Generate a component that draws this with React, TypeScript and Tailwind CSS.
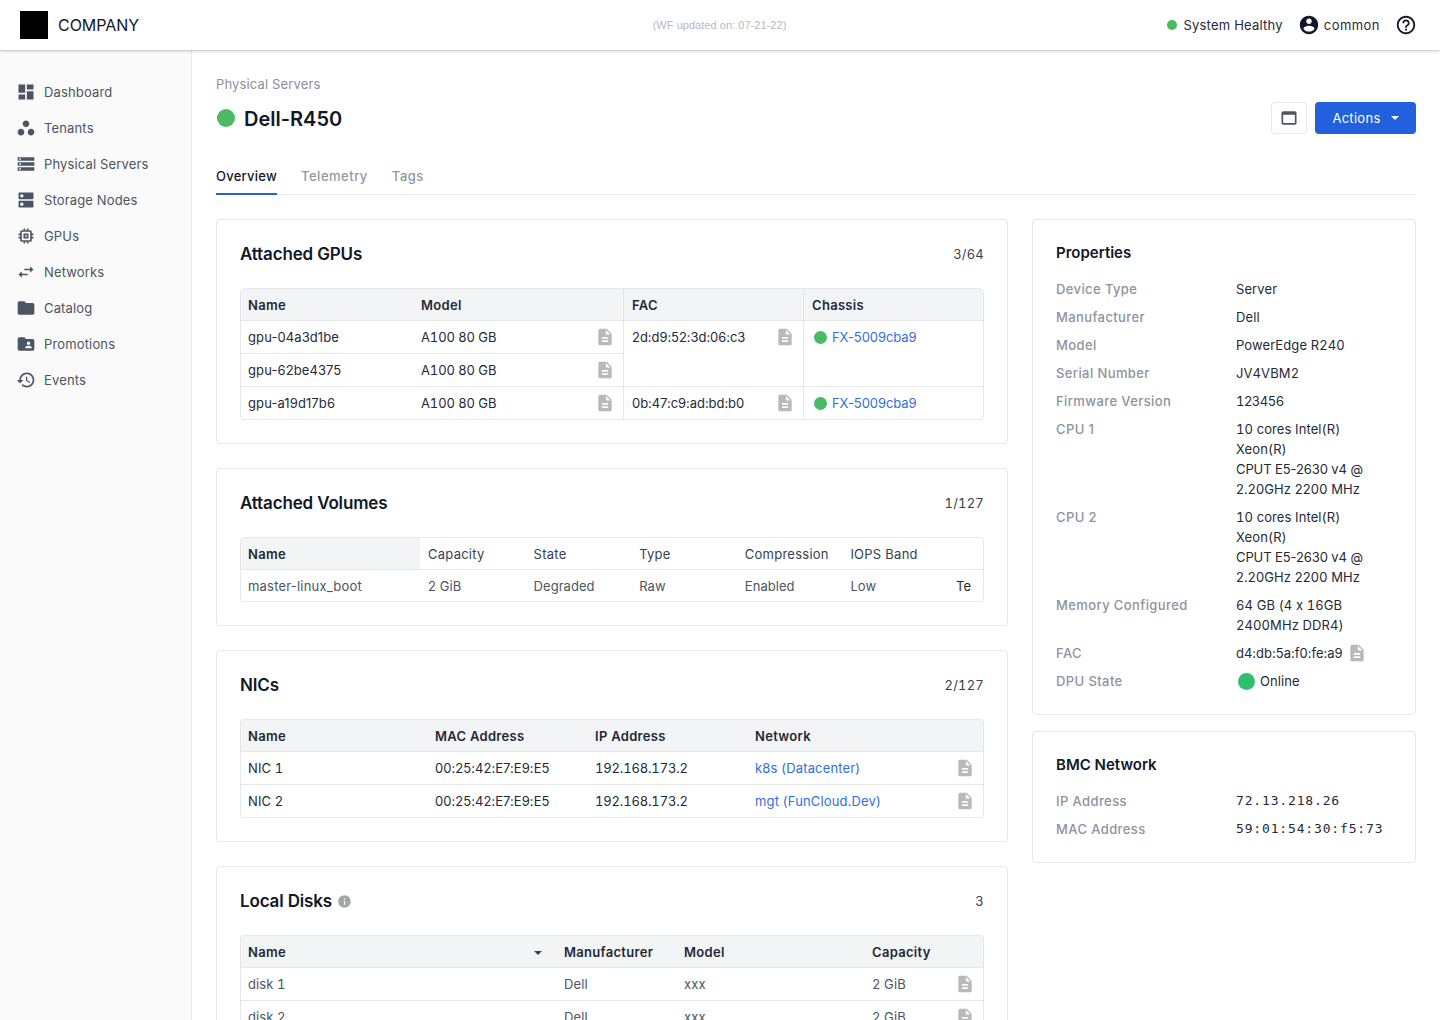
import React from 'react';

const icons = {
  dashboard: 'M3 13h8V3H3v10zm0 8h8v-6H3v6zm10 0h8V11h-8v10zm0-18v6h8V3h-8z',
  workspaces:
    'M6 13c-2.2 0-4 1.8-4 4s1.8 4 4 4 4-1.8 4-4-1.8-4-4-4zm12 0c-2.2 0-4 1.8-4 4s1.8 4 4 4 4-1.8 4-4-1.8-4-4-4zm-6-10C9.8 3 8 4.8 8 7s1.8 4 4 4 4-1.8 4-4-1.8-4-4-4z',
  storage: 'M2 20h20v-4H2v4zm2-3h2v2H4v-2zM2 4v4h20V4H2zm4 3H4V5h2v2zm-4 7h20v-4H2v4zm2-3h2v2H4v-2z',
  dns: 'M20 13H4c-.55 0-1 .45-1 1v6c0 .55.45 1 1 1h16c.55 0 1-.45 1-1v-6c0-.55-.45-1-1-1zM7 19c-1.1 0-2-.9-2-2s.9-2 2-2 2 .9 2 2-.9 2-2 2zM20 3H4c-.55 0-1 .45-1 1v6c0 .55.45 1 1 1h16c.55 0 1-.45 1-1V4c0-.55-.45-1-1-1zM7 9c-1.1 0-2-.9-2-2s.9-2 2-2 2 .9 2 2-.9 2-2 2z',
  memory:
    'M15 9H9v6h6V9zm-2 4h-2v-2h2v2zm8-2V9h-2V7c0-1.1-.9-2-2-2h-2V3h-2v2h-2V3H9v2H7c-1.1 0-2 .9-2 2v2H3v2h2v2H3v2h2v2c0 1.1.9 2 2 2h2v2h2v-2h2v2h2v-2h2c1.1 0 2-.9 2-2v-2h2v-2h-2v-2h2zm-4 6H7V7h10v10z',
  swap: 'M6.99 11L3 15l3.99 4v-3H14v-2H6.99v-3zM21 9l-3.99-4v3H10v2h7.01v3L21 9z',
  folder: 'M10 4H4c-1.1 0-1.99.9-1.99 2L2 18c0 1.1.9 2 2 2h16c1.1 0 2-.9 2-2V8c0-1.1-.9-2-2-2h-8l-2-2z',
  folderShared:
    'M20 6h-8l-2-2H4c-1.1 0-1.99.9-1.99 2L2 18c0 1.1.9 2 2 2h16c1.1 0 2-.9 2-2V8c0-1.1-.9-2-2-2zm-5 3c1.1 0 2 .9 2 2s-.9 2-2 2-2-.9-2-2 .9-2 2-2zm4 8h-8v-1c0-1.33 2.67-2 4-2s4 .67 4 2v1z',
  history:
    'M13 3c-4.97 0-9 4.03-9 9H1l3.89 3.89.07.14L9 12H6c0-3.87 3.13-7 7-7s7 3.13 7 7-3.13 7-7 7c-1.93 0-3.68-.79-4.94-2.06l-1.42 1.42C8.27 19.99 10.51 21 13 21c4.97 0 9-4.03 9-9s-4.03-9-9-9zm-1 5v5l4.28 2.54.72-1.21-3.5-2.08V8H12z',
  account:
    'M12 2C6.48 2 2 6.48 2 12s4.48 10 10 10 10-4.48 10-10S17.52 2 12 2zm0 3c1.66 0 3 1.34 3 3s-1.34 3-3 3-3-1.34-3-3 1.34-3 3-3zm0 14.2c-2.5 0-4.71-1.28-6-3.22.03-1.99 4-3.08 6-3.08 1.99 0 5.97 1.09 6 3.08-1.29 1.94-3.5 3.22-6 3.22z',
  help: 'M11 18h2v-2h-2v2zm1-16C6.48 2 2 6.48 2 12s4.48 10 10 10 10-4.48 10-10S17.52 2 12 2zm0 18c-4.41 0-8-3.59-8-8s3.59-8 8-8 8 3.59 8 8-3.59 8-8 8zm0-14c-2.21 0-4 1.79-4 4h2c0-1.1.9-2 2-2s2 .9 2 2c0 2-3 1.75-3 5h2c0-2.25 3-2.5 3-5 0-2.21-1.79-4-4-4z',
  webAsset: 'M19 4H5c-1.11 0-2 .9-2 2v12c0 1.1.89 2 2 2h14c1.1 0 2-.9 2-2V6c0-1.1-.89-2-2-2zm0 14H5V8h14v10z',
  doc: 'M14.59 2.59c-.38-.38-.89-.59-1.42-.59H6c-1.1 0-2 .9-2 2v16c0 1.1.89 2 1.99 2H18c1.1 0 2-.9 2-2V8.83c0-.53-.21-1.04-.59-1.41l-4.82-4.83zM15 18H9c-.55 0-1-.45-1-1s.45-1 1-1h6c.55 0 1 .45 1 1s-.45 1-1 1zm0-4H9c-.55 0-1-.45-1-1s.45-1 1-1h6c.55 0 1 .45 1 1s-.45 1-1 1zm-2-6V3.5L18.5 9H14c-.55 0-1-.45-1-1z',
  info: 'M12 2C6.48 2 2 6.48 2 12s4.48 10 10 10 10-4.48 10-10S17.52 2 12 2zm1 15h-2v-6h2v6zm0-8h-2V7h2v2z',
};

function Icon({ d, className }: { d: string; className: string }) {
  return (
    <svg viewBox="0 0 24 24" fill="currentColor" className={className}>
      <path d={d} />
    </svg>
  );
}

const DocIcon = () => <Icon d={icons.doc} className="w-5 h-5 text-[#b8b9bd] shrink-0" />;

const Caret = ({ className }: { className: string }) => (
  <svg viewBox="0 0 10 5" fill="currentColor" className={className}>
    <path d="M0 0h10L5 5z" />
  </svg>
);

const navItems = [
  { label: 'Dashboard', icon: icons.dashboard },
  { label: 'Tenants', icon: icons.workspaces },
  { label: 'Physical Servers', icon: icons.storage },
  { label: 'Storage Nodes', icon: icons.dns },
  { label: 'GPUs', icon: icons.memory },
  { label: 'Networks', icon: icons.swap },
  { label: 'Catalog', icon: icons.folder },
  { label: 'Promotions', icon: icons.folderShared },
  { label: 'Events', icon: icons.history },
];

function Sidebar() {
  return (
    <aside className="w-[192px] shrink-0 bg-[#fafafa] border-r border-[#e5e7eb] pt-6">
      {navItems.map((item) => (
        <div key={item.label} className="h-9 pl-4 flex items-center gap-2 text-[13px] tracking-[0.15px] text-[#4b5563]">
          <Icon d={item.icon} className="w-5 h-5 text-[#4b5563]" />
          <span className="pt-0.5">{item.label}</span>
        </div>
      ))}
    </aside>
  );
}

function Card({ title, count, info, children }: { title: string; count: string; info?: boolean; children: React.ReactNode }) {
  return (
    <section className="bg-white border border-[#e5e7eb] rounded p-[23px]">
      <div className="h-5 mb-[25px] pt-[3px] flex items-center justify-between">
        <h2 className="flex items-center gap-[5px] text-[17px] font-semibold tracking-[-0.15px] text-[#111827]">
          {title}
          {info && <Icon d={icons.info} className="w-[15px] h-[15px] text-[#a3a5aa]" />}
        </h2>
        <span className="text-[13px] tabular-nums tracking-[0.2px] text-[#374151]">{count}</span>
      </div>
      {children}
    </section>
  );
}

const th =
  "h-8 px-2 first:pl-[7px] pt-0.5 pb-0 text-left text-[13px] font-semibold tracking-[0.3px] text-[#1f2937] bg-[#f3f4f6] border-b border-[#e5e7eb]";
// cells hold either plain text (nudged down by pt-0.5) or a h-8 flex row
const td = 'h-[33px] px-2 first:pl-[7px] py-0 text-[13px] tracking-[0.1px] text-[#1f2937] border-b border-[#e5e7eb]';
const tdLast = 'h-8 px-2 first:pl-[7px] py-0 text-[13px] tracking-[0.1px] text-[#1f2937]';
const num = 'tabular-nums tracking-[-0.15px]';
const nudge = 'block pt-0.5';

const StatusLink = ({ label }: { label: string }) => (
  <div className="flex items-center gap-[5px] h-8">
    <span className="w-[13px] h-[13px] ml-0.5 rounded-full bg-[#48bb63]" />
    <a className="pt-0.5 tracking-[-0.08px] text-[#2f6fe4]">{label}</a>
  </div>
);

const CellWithDoc = ({ text, numeric }: { text: string; numeric?: boolean }) => (
  <div className="flex items-center justify-between h-8">
    <span className={`pt-0.5 ${numeric ? 'tabular-nums tracking-[-0.1px]' : 'tracking-[-0.05px]'}`}>{text}</span>
    <DocIcon />
  </div>
);

function GpuTable() {
  return (
    <div className="border border-[#e5e7eb] rounded overflow-hidden">
      <table className="w-full table-fixed border-separate border-spacing-0">
        <colgroup>
          <col className="w-[172px]" />
          <col className="w-[210px]" />
          <col className="w-[180px]" />
          <col />
        </colgroup>
        <thead>
          <tr>
            <th className={th}>Name</th>
            <th className={th}>Model</th>
            <th className={`${th} border-l`}>FAC</th>
            <th className={`${th} border-l`}>Chassis</th>
          </tr>
        </thead>
        <tbody>
          <tr>
            <td className={td}><span className={nudge}>gpu-04a3d1be</span></td>
            <td className={td}><CellWithDoc numeric text="A100 80 GB" /></td>
            <td rowSpan={2} className={`${td} border-l align-top`}><CellWithDoc text="2d:d9:52:3d:06:c3" /></td>
            <td rowSpan={2} className={`${td} border-l align-top`}><StatusLink label="FX-5009cba9" /></td>
          </tr>
          <tr>
            <td className={td}><span className={nudge}>gpu-62be4375</span></td>
            <td className={td}><CellWithDoc numeric text="A100 80 GB" /></td>
          </tr>
          <tr>
            <td className={tdLast}><span className={nudge}>gpu-a19d17b6</span></td>
            <td className={tdLast}><CellWithDoc numeric text="A100 80 GB" /></td>
            <td className={`${tdLast} border-l border-[#e5e7eb]`}><CellWithDoc text="0b:47:c9:ad:bd:b0" /></td>
            <td className={`${tdLast} border-l border-[#e5e7eb]`}><StatusLink label="FX-5009cba9" /></td>
          </tr>
        </tbody>
      </table>
    </div>
  );
}

function VolumesTable() {
  const heads = ['Capacity', 'State', 'Type', 'Compression', 'IOPS Band'];
  const cols = ['2 GiB', 'Degraded', 'Raw', 'Enabled', 'Low', 'Te'];
  return (
    <div className="border border-[#e5e7eb] rounded overflow-hidden">
      <div className="flex h-8 border-b border-[#e5e7eb] overflow-hidden">
        <div className="w-[179px] shrink-0 pl-[7px] pt-0.5 flex items-center bg-[#f3f4f6] text-[13px] font-semibold tracking-[0.3px] text-[#1f2937]">Name</div>
        {heads.map((h) => (
          <div key={h} className="w-[105.6px] shrink-0 px-2 pt-0.5 flex items-center text-[13px] tracking-[0.25px] text-[#374151] whitespace-nowrap">{h}</div>
        ))}
      </div>
      <div className="flex h-[31px] overflow-hidden">
        <div className="w-[179px] shrink-0 pl-[7px] pt-0.5 flex items-center text-[13px] tracking-[0.2px] text-[#4b5563]">master-linux_boot</div>
        {cols.map((c, i) => (
          <div key={c} className={`w-[105.6px] shrink-0 px-2 pt-0.5 flex items-center text-[13px] tracking-[0.05px] ${i === 5 ? 'text-[#1f2937]' : 'text-[#4b5563]'}`}>{c}</div>
        ))}
      </div>
    </div>
  );
}

function NicsTable() {
  const rows = [
    ['NIC 1', '00:25:42:E7:E9:E5', '192.168.173.2', 'k8s (Datacenter)'],
    ['NIC 2', '00:25:42:E7:E9:E5', '192.168.173.2', 'mgt (FunCloud.Dev)'],
  ];
  return (
    <div className="border border-[#e5e7eb] rounded overflow-hidden">
      <table className="w-full table-fixed border-separate border-spacing-0">
        <colgroup>
          <col className="w-[186px]" />
          <col className="w-[160px]" />
          <col className="w-[160px]" />
          <col />
        </colgroup>
        <thead>
          <tr>
            <th className={th}>Name</th>
            <th className={th}>MAC Address</th>
            <th className={th}>IP Address</th>
            <th className={th}>Network</th>
          </tr>
        </thead>
        <tbody>
          {rows.map((r, i) => {
            const cell = i === 1 ? tdLast : td;
            return (
              <tr key={r[0]}>
                <td className={`${cell} tabular-nums`}><span className={nudge}>{r[0]}</span></td>
                <td className={cell}><span className={`${nudge} tracking-[0.05px]`}>{r[1]}</span></td>
                <td className={cell}><span className={`${nudge} ${num}`}>{r[2]}</span></td>
                <td className={cell}>
                  <div className="flex items-center justify-between h-8">
                    <a className="pt-0.5 tracking-[0.15px] text-[#2f6fe4]">{r[3]}</a>
                    <DocIcon />
                  </div>
                </td>
              </tr>
            );
          })}
        </tbody>
      </table>
    </div>
  );
}

function DisksTable() {
  return (
    <div className="border border-[#e5e7eb] rounded overflow-hidden">
      <table className="w-full table-fixed border-separate border-spacing-0">
        <colgroup>
          <col className="w-[315px]" />
          <col className="w-[120px]" />
          <col className="w-[188px]" />
          <col />
        </colgroup>
        <thead>
          <tr>
            <th className={th}>
              <div className="flex items-center justify-between">
                Name
                <Caret className="w-2 h-1 mr-1.5 text-[#374151]" />
              </div>
            </th>
            <th className={th}>Manufacturer</th>
            <th className={th}>Model</th>
            <th className={th}>Capacity</th>
          </tr>
        </thead>
        <tbody className="[&_td]:text-[#4b5563] tabular-nums">
          {['disk 1', 'disk 2'].map((d) => (
            <tr key={d}>
              <td className={td}><span className={nudge}>{d}</span></td>
              <td className={td}><span className={nudge}>Dell</span></td>
              <td className={td}><span className={nudge}>xxx</span></td>
              <td className={td}>
                <div className="flex items-center justify-between h-8">
                  <span className="pt-0.5">2 GiB</span>
                  <DocIcon />
                </div>
              </td>
            </tr>
          ))}
        </tbody>
      </table>
    </div>
  );
}

function PropRow({ label, children }: { label: string; children: React.ReactNode }) {
  return (
    <div className="flex text-[13px] leading-5 tracking-[0.1px]">
      <div className="w-[180px] shrink-0 font-medium tracking-[0.4px] text-[#8e939d]">{label}</div>
      <div className="text-[#1f2937] tabular-nums">{children}</div>
    </div>
  );
}

function InfoCard({ title, children }: { title: string; children: React.ReactNode }) {
  return (
    <section className="bg-white border border-[#e5e7eb] rounded p-[23px]">
      <h3 className="h-[18px] pt-px leading-[18px] mb-[18px] text-[15px] font-semibold text-[#111827]">{title}</h3>
      <div className="flex flex-col gap-2">{children}</div>
    </section>
  );
}

const cpu = (
  <>
    10 cores Intel(R)
    <br />
    Xeon(R)
    <br />
    <span className="normal-nums tracking-[-0.1px]">CPUT E5-2630 v4 @</span>
    <br />
    <span className="normal-nums">2.20GHz 2200 MHz</span>
  </>
);

const mono = "block leading-5 font-['DejaVu_Sans_Mono',monospace] text-[13px] tracking-[0.84px]";

function RightColumn() {
  return (
    <div className="w-[384px] shrink-0 flex flex-col gap-4">
      <InfoCard title="Properties">
        <PropRow label="Device Type">Server</PropRow>
        <PropRow label="Manufacturer">Dell</PropRow>
        <PropRow label="Model">PowerEdge R240</PropRow>
        <PropRow label="Serial Number">JV4VBM2</PropRow>
        <PropRow label="Firmware Version"><span className="tracking-[-0.5px]">123456</span></PropRow>
        <PropRow label="CPU 1">{cpu}</PropRow>
        <PropRow label="CPU 2">{cpu}</PropRow>
        <PropRow label="Memory Configured">
          64 GB (4 x 16GB
          <br />
          2400MHz DDR4)
        </PropRow>
        <PropRow label="FAC">
          <div className="flex items-center gap-[4px] normal-nums tracking-[0px]">
            d4:db:5a:f0:fe:a9
            <DocIcon />
          </div>
        </PropRow>
        <PropRow label="DPU State">
          <div className="flex items-center gap-[5px]">
            <span className="w-[17px] h-[17px] ml-0.5 rounded-full bg-[#2fbf71]" />
            Online
          </div>
        </PropRow>
      </InfoCard>
      <InfoCard title="BMC Network">
        <PropRow label="IP Address"><span className={mono}>72.13.218.26</span></PropRow>
        <PropRow label="MAC Address"><span className={mono}>59:01:54:30:f5:73</span></PropRow>
      </InfoCard>
    </div>
  );
}

export default function App() {
  return (
    <div className="h-[1020px] overflow-hidden flex flex-col bg-white font-['Inter',sans-serif]">
      <header className="relative z-10 h-[50px] shrink-0 bg-white shadow-[0_1px_3px_rgba(0,0,0,0.25)] flex items-center justify-between pl-5 pr-[23px]">
        <div className="flex items-center gap-2.5 w-[400px]">
          <div className="w-7 h-7 bg-black" />
          <span className="text-base tracking-[-0.05px] text-[#111827]">COMPANY</span>
        </div>
        <span className="ml-0.5 text-[11px] tracking-[0.04px] text-[#b4b8bf] font-['Liberation_Sans',sans-serif]">(WF updated on: 07-21-22)</span>
        <div className="w-[400px] flex items-center justify-end text-[13px] tracking-[0.22px] text-[#1f2937]">
          <span className="w-2.5 h-2.5 rounded-full bg-[#48bb63] mr-1.5" />
          <span className="pt-0.5">System Healthy</span>
          <Icon d={icons.account} className="w-[22px] h-[22px] ml-[15px] text-[#111827]" />
          <span className="ml-1 pt-0.5 tracking-[0.45px]">common</span>
          <Icon d={icons.help} className="w-[22px] h-[22px] ml-[15px] text-[#111827]" />
        </div>
      </header>
      <div className="flex-1 flex min-h-0">
        <Sidebar />
        <main className="flex-1 min-w-0 pl-6 pr-6 pt-6">
          <div className="text-[13px] leading-5 tracking-[0.15px] text-[#8b909a]">Physical Servers</div>
          <div className="flex items-center justify-between h-8 mt-2">
            <div className="flex items-center gap-[9px] pl-px">
              <span className="w-[18px] h-[18px] rounded-full bg-[#48bb63]" />
              <h1 className="pt-px text-xl font-semibold text-[#111827]">Dell-R450</h1>
            </div>
            <div className="flex items-center gap-2">
              <button className="w-9 h-8 flex items-center justify-center rounded border border-[#e5e7eb] bg-white">
                <Icon d={icons.webAsset} className="w-5 h-5 text-[#4b5563]" />
              </button>
              <button className="w-[101px] h-8 flex items-center justify-center gap-2.5 rounded bg-[#2260dd] text-[13px] tracking-[0.3px] text-white">
                <span className="pt-0.5">Actions</span>
                <Caret className="w-2 h-1 text-white" />
              </button>
            </div>
          </div>
          <nav className="mt-6 h-[37px] flex gap-6 border-b border-[#e5e7eb] text-[13px] font-medium tracking-[0.5px]">
            <div className="h-[37px] pt-[9px] border-b-2 border-[#2260dd] tracking-[0.25px] text-[#111827]">Overview</div>
            <div className="pt-[9px] text-[#9298a3]">Telemetry</div>
            <div className="pt-[9px] text-[#9298a3]">Tags</div>
          </nav>
          <div className="mt-6 flex gap-6 items-start">
            <div className="flex-1 min-w-0 flex flex-col gap-6">
              <Card title="Attached GPUs" count="3/64"><GpuTable /></Card>
              <Card title="Attached Volumes" count="1/127"><VolumesTable /></Card>
              <Card title="NICs" count="2/127"><NicsTable /></Card>
              <Card title="Local Disks" count="3" info><DisksTable /></Card>
            </div>
            <RightColumn />
          </div>
        </main>
      </div>
    </div>
  );
}
